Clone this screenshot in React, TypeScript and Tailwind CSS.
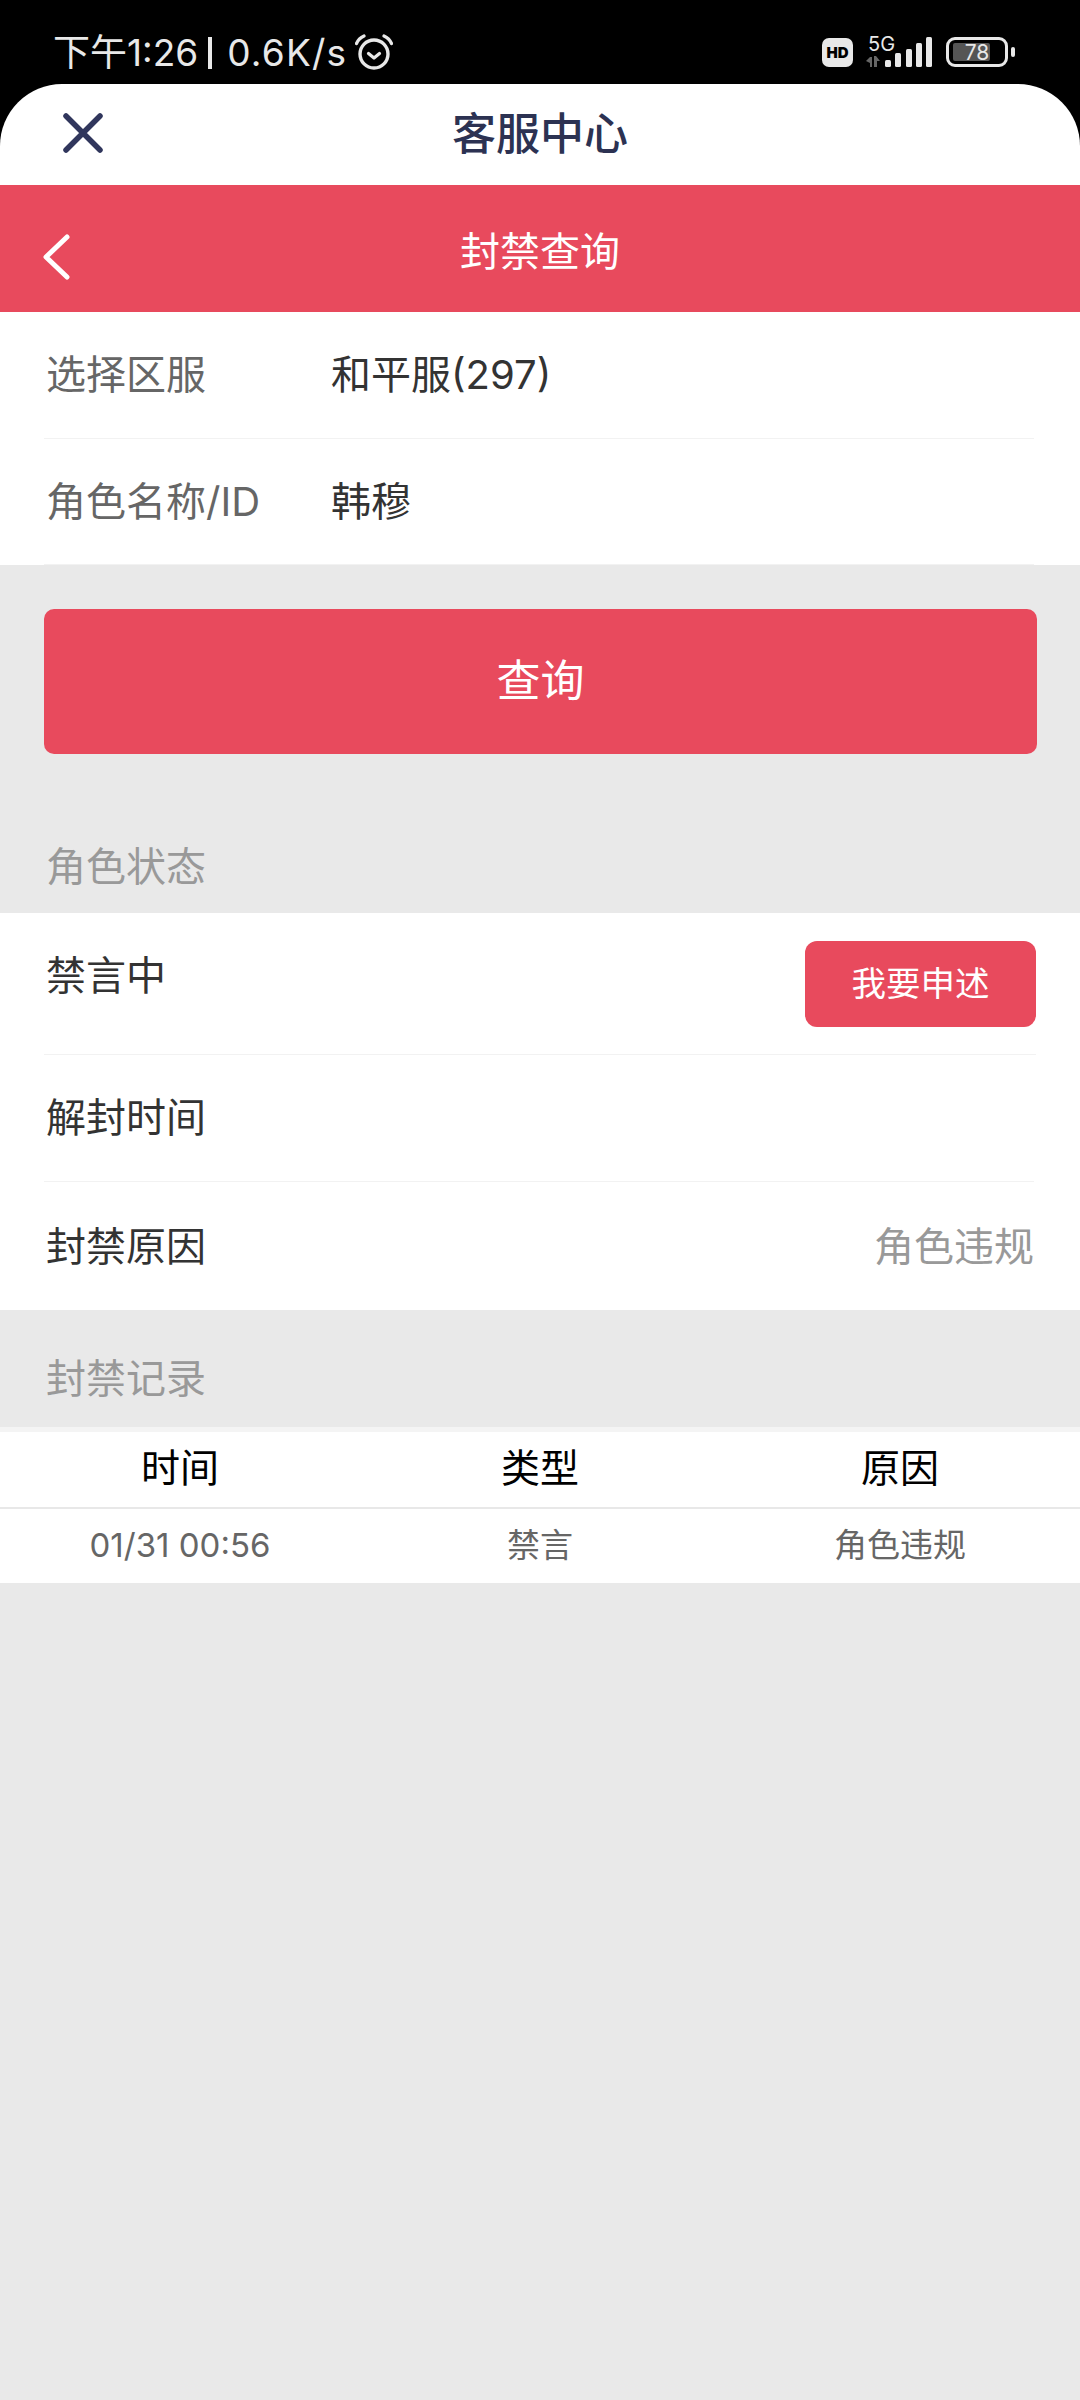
import React from "react";

const FONT = "font-['Inter','Noto_Sans_CJK_SC',sans-serif]";

function StatusBar() {
  return (
    <div className="relative flex h-[84px] items-start justify-between bg-black pl-[53px] pr-[65px] pt-[33px] text-[#e8e8e8]">
      <div className="flex items-center text-[37px] leading-none">
        <span>下午1:26</span>
        <span className="ml-[10px] mr-[15px] mt-[2px] h-[32px] w-[4px] bg-[#e8e8e8]" />
        <span className="tracking-[1.2px]">0.6K/s</span>
        <svg width="38" height="38" viewBox="0 0 38 38" className="ml-[8px]" fill="none" stroke="currentColor" strokeLinecap="round">
          <circle cx="19" cy="21" r="14" strokeWidth="3.4" />
          <path d="M13.5 20.5l5.5 4.5 5.5-4.5" strokeWidth="3.2" strokeLinejoin="round" />
          <path d="M1.5 10.5c1.5-3.5 4-6 7.5-7.5M36.5 10.5c-1.5-3.5-4-6-7.5-7.5" strokeWidth="3.2" />
        </svg>
      </div>
      <div className="mt-[4px] flex items-center">
        <div className="flex h-[29px] w-[31px] items-center justify-center rounded-[7px] bg-[#e8e8e8] text-[15px] font-black leading-none text-black">HD</div>
        <div className="relative ml-[13px] h-[30px] w-[66px]">
          <span className="absolute left-[2px] top-[-3px] text-[20px] leading-[20px]">5G</span>
          <svg width="66" height="30" viewBox="0 0 66 30" className="absolute left-0 top-0" fill="currentColor">
            <path d="M0 24l4-4h2v10H4v-4zM8 19h2l4 5h-3v6H8z" fill="#666" />
            <rect x="19" y="23" width="6" height="7" rx="1.5" />
            <rect x="29" y="16" width="6" height="14" rx="1.5" />
            <rect x="40" y="12" width="6" height="18" rx="1.5" />
            <rect x="50" y="6" width="6" height="24" rx="1.5" />
            <rect x="60" y="0" width="6" height="30" rx="1.5" />
          </svg>
        </div>
        <div className="ml-[14px] flex items-center">
          <div className="relative flex h-[30px] w-[62px] items-center justify-center rounded-[9px] border-[3px] border-[#e8e8e8] p-[3px]">
            <div className="absolute bottom-[3px] left-[4px] top-[3px] w-[37px] rounded-[2px] bg-[#555]" />
            <span className="relative text-[21px] leading-none">78</span>
          </div>
          <div className="ml-[3px] h-[10px] w-[4px] rounded-[2px] bg-[#e8e8e8]" />
        </div>
      </div>
    </div>
  );
}

function Row({ label, value, gray }: { label: string; value: string; gray?: boolean }) {
  return (
    <div className="ml-[44px] mr-[46px] flex h-[126.5px] items-center border-b border-[#f2f2f2] pl-[2px] pt-[1px] text-[40px] leading-none">
      <span className={gray ? "w-[285px] text-[#666666]" : "text-[#333333]"}>{label}</span>
      {gray ? (
        <span className="text-[#333333]">{value}</span>
      ) : (
        <span className="ml-auto text-[#999999]">{value}</span>
      )}
    </div>
  );
}

function SectionTitle({ text, className }: { text: string; className: string }) {
  return <div className={`pl-[46px] text-[40px] leading-none text-[#999999] ${className}`}>{text}</div>;
}

export default function App() {
  return (
    <div className={`min-h-[2400px] w-[1080px] bg-[#e9e9e9] ${FONT}`}>
      <div className="bg-black">
        <StatusBar />
        <div className="relative flex h-[101px] items-center justify-center rounded-t-[62px] bg-white pb-[2px]">
          <svg width="40" height="40" viewBox="0 0 40 40" className="absolute left-[63px] top-[29px]" fill="none" stroke="#30365c" strokeWidth="5.5" strokeLinecap="round">
            <path d="M3 3l34 34M37 3L3 37" />
          </svg>
          <span className="text-[44px] font-medium leading-none text-[#2c3252]">客服中心</span>
        </div>
      </div>

      <div className="relative flex h-[127px] items-center justify-center bg-[#e84a5d] pt-[6px]">
        <svg width="28" height="46" viewBox="0 0 28 46" className="absolute left-[43px] top-[49px]" fill="none" stroke="#ffffff" strokeWidth="5" strokeLinecap="round" strokeLinejoin="round">
          <path d="M24 3L3 23l21 20" />
        </svg>
        <span className="text-[40px] leading-none text-white">封禁查询</span>
      </div>

      <div className="bg-white">
        <Row label="选择区服" value="和平服(297)" gray />
        <Row label="角色名称/ID" value="韩穆" gray />
      </div>

      <div className="ml-[44px] mr-[43px] mt-[44px] flex h-[145px] items-center justify-center rounded-[10px] bg-[#e84a5d] pb-[2px] text-[44px] leading-none text-white">
        查询
      </div>

      <SectionTitle text="角色状态" className="mt-[93px]" />

      <div className="mt-[26px] bg-white">
        <div className="ml-[44px] mr-[44px] flex h-[142px] items-start justify-between border-b border-[#f2f2f2]">
          <span className="mt-[43px] pl-[2px] text-[40px] leading-none text-[#333333]">禁言中</span>
          <button className="mt-[28px] flex h-[86px] w-[231px] items-center justify-center rounded-[12px] bg-[#e84a5d] text-[34.5px] leading-none text-white">
            我要申述
          </button>
        </div>
        <Row label="解封时间" value="" />
        <div className="ml-[44px] mr-[46px] flex h-[128px] items-center pt-[2px] text-[40px] leading-none">
          <span className="pl-[2px] text-[#333333]">封禁原因</span>
          <span className="ml-auto text-[#999999]">角色违规</span>
        </div>
      </div>

      <SectionTitle text="封禁记录" className="mt-[49px]" />

      <div className="mt-[28px] border-t-[5px] border-[#f4f4f4] bg-white">
        <div className="grid h-[77px] grid-cols-3 items-center border-b-2 border-[#e8e8e8] pb-[3px] text-center text-[39px] leading-none text-black">
          <span>时间</span>
          <span>类型</span>
          <span>原因</span>
        </div>
        <div className="grid h-[74px] grid-cols-3 items-center text-center text-[33px] leading-none text-[#666666]">
          <span>01/31 00:56</span>
          <span>禁言</span>
          <span>角色违规</span>
        </div>
      </div>
    </div>
  );
}
